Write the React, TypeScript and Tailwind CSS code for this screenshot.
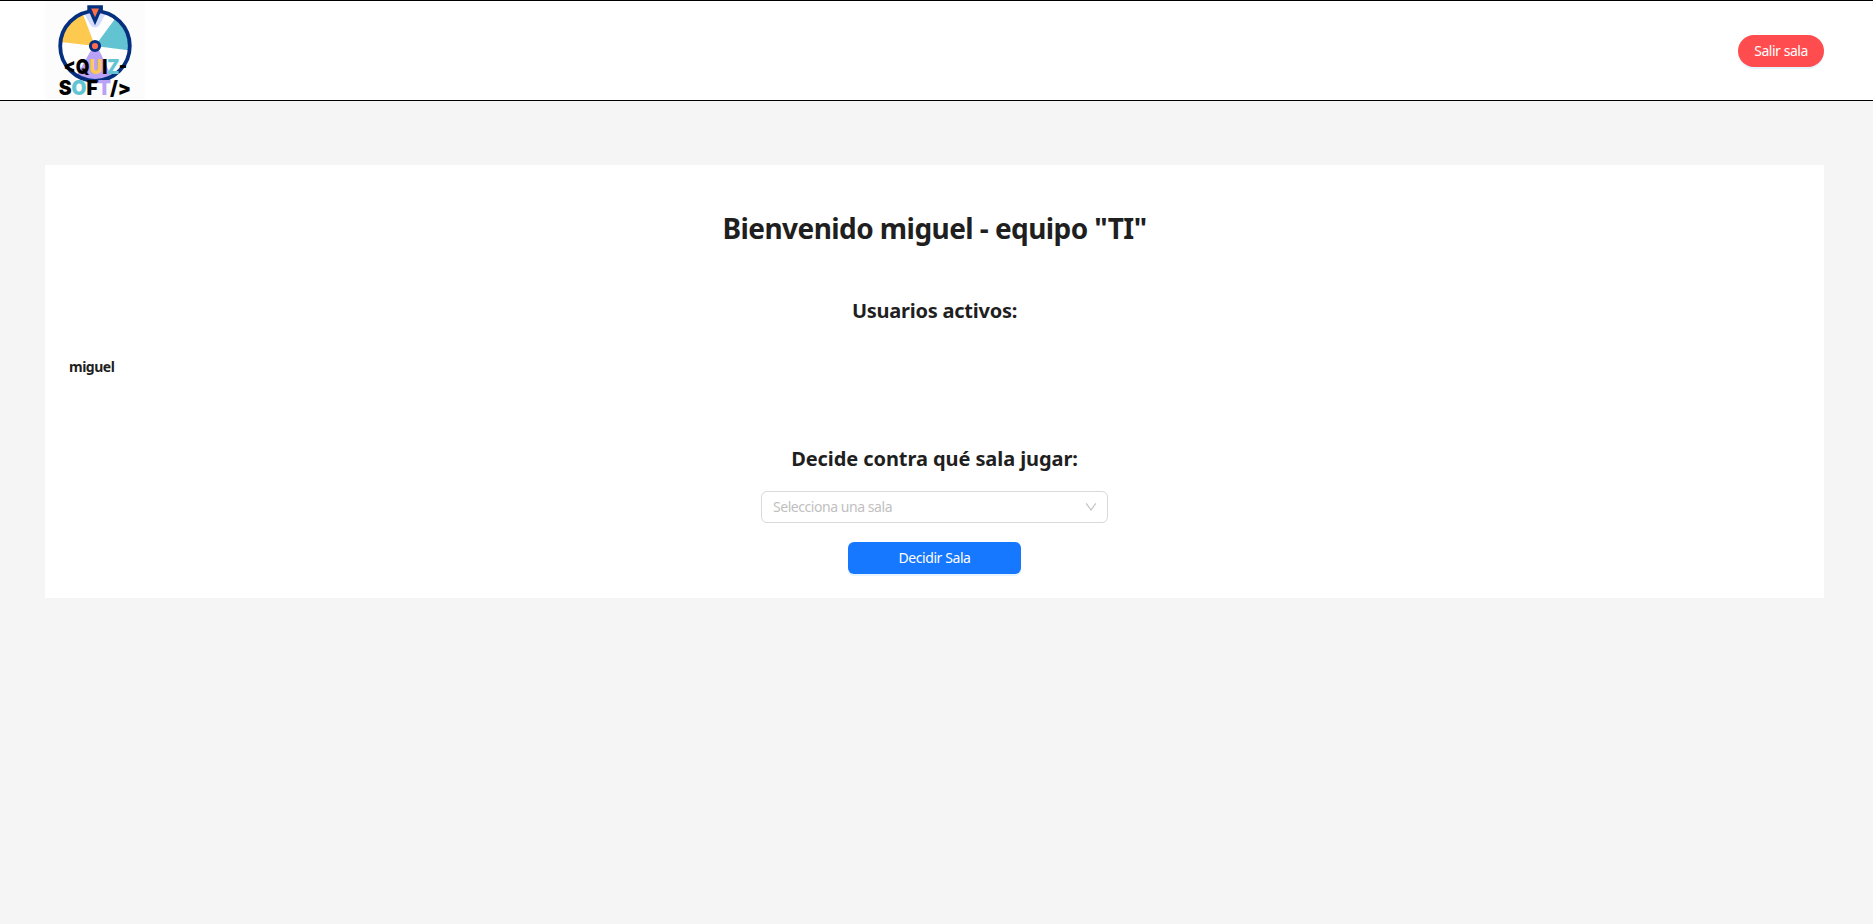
function Logo() {
  return (
    <svg viewBox="45 1 100 99" className="block h-[99px] w-[100px]" role="img" aria-label="Quiz-Soft">
      <rect x="45" y="1" width="100" height="98" fill="#fcfcfc" />
      <circle cx="95" cy="46" r="34" fill="#fefefe" />
      <path d="M95 46 61.2 42A34 34 0 0 1 83 14.5Z" fill="#fdc94f" />
      <path d="M95 46 114.5 19.5A34 34 0 0 1 128.5 50.2Z" fill="#62c3d2" />
      <path d="M95 46 90 52 76.5 76A36 36 0 0 0 112 77.5L100 52Z" fill="#b9a2f5" />
      <path d="M84 13 90.5 25Q95 30 99.5 25L106 13Z" fill="#d3dcfb" />
      <circle cx="95" cy="46" r="34.8" fill="none" stroke="#04307f" strokeWidth="3.8" />
      <path d="M88 5.9H102.2V9.6H101L95 23.4 89 9.6H88Z" fill="#04307f" stroke="#04307f" strokeWidth="1.4" />
      <path d="M91.2 8.6H99L95 17.2Z" fill="#ff7048" />
      <circle cx="95" cy="46" r="4.6" fill="#ff6b4e" stroke="#04307f" strokeWidth="3" />
      <g fontFamily="Inter, sans-serif" fontWeight="900" fontSize="19.6" fill="#000">
        <text x="63.6" y="73.6" textLength="63.6" lengthAdjust="spacingAndGlyphs" stroke="#000" strokeWidth="0">
          &lt;Q<tspan fill="#fdc94f">U</tspan>I<tspan fill="#62c3d2">Z</tspan>-
        </text>
        <text x="58.8" y="94.8" textLength="72.4" lengthAdjust="spacingAndGlyphs">
          S<tspan fill="#62c3d2">O</tspan>F<tspan fill="#b9a2f5">T</tspan>/&gt;
        </text>
      </g>
    </svg>
  );
}

export default function App() {
  return (
    <div className="min-h-screen bg-[#f5f5f5] font-['Noto_Sans',sans-serif] text-sm text-[#1f1f1f]">
      <header className="flex h-[101px] items-center justify-between border-y border-black bg-white pr-[49px] pl-[45px]">
        <Logo />
        <button className="h-8 w-[86px] rounded-full bg-[#ff4d4f] text-sm text-white shadow-[0_2px_0_rgba(5,145,255,0.1)]">
          <span className="tracking-[-0.45px]">Salir sala</span>
        </button>
      </header>
      <main className="mt-16 mr-[49px] ml-[45px] flex h-[433px] flex-col items-center bg-white px-6">
        <h1 className="mt-[42px] text-[28px] leading-[42px] font-bold tracking-[-0.57px]">Bienvenido miguel - equipo "TI"</h1>
        <h2 className="mt-[46px] text-[20px] leading-[32px] font-bold tracking-[-0.25px]">Usuarios activos:</h2>
        <ul className="mt-[29px] w-full">
          <li className="leading-[22px] font-bold tracking-[-0.5px]">
            <span>miguel</span>
          </li>
        </ul>
        <h2 className="mt-[65px] text-[20px] leading-[32px] font-bold tracking-[-0.08px]">Decide contra qué sala jugar:</h2>
        <div className="mt-[16px] flex h-8 w-[347px] shrink-0 items-center justify-between rounded-md border border-[#d9d9d9] pr-[10px] pl-[11px] text-[#bfbfbf]">
          <span className="tracking-[-0.45px]">Selecciona una sala</span>
          <svg viewBox="0 0 12 12" className="size-3" fill="none" stroke="#bfbfbf" strokeWidth="1.1">
            <path d="M1.2 2.4 6 9 10.8 2.4" />
          </svg>
        </div>
        <button className="mt-[19px] h-8 w-[173px] shrink-0 rounded-md bg-[#1677ff] text-white shadow-[0_2px_0_rgba(5,145,255,0.1)]">
          <span className="tracking-[-0.42px]">Decidir Sala</span>
        </button>
      </main>
    </div>
  );
}
